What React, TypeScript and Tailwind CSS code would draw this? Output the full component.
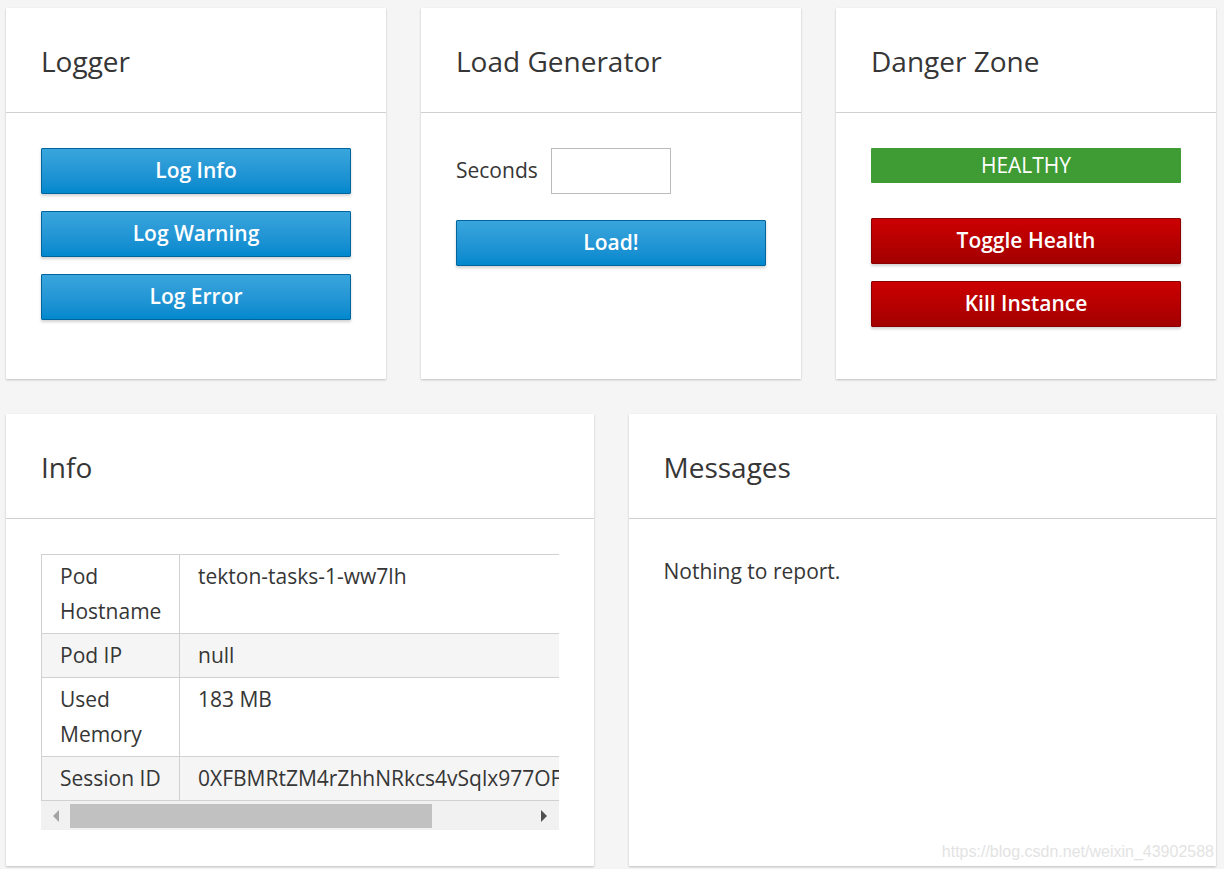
import type { ReactNode } from 'react'

const font = { fontFamily: '"Open Sans", "Noto Sans", sans-serif' }

function Card({ title, children }: { title: string; children: ReactNode }) {
  return (
    <section className="flex flex-col bg-white shadow-[0_1px_2px_0_rgba(0,0,0,0.22)]">
      {/* Header */}
      <div className="flex h-[105px] items-center border-b border-[#d1d1d1] px-[35px] pt-[1px]">
        <h2 className="text-[28px] font-normal leading-none text-[#363636]">{title}</h2>
      </div>
      <div className="flex flex-1 flex-col px-[35px] pt-[35px] pb-[35px]">{children}</div>
    </section>
  )
}

function Btn({ children, danger = false }: { children: ReactNode; danger?: boolean }) {
  return (
    <button
      className={
        danger
          ? 'flex h-[46px] w-full items-center justify-center rounded-[1px] border border-[#8b0000] bg-gradient-to-b from-[#cc0000] to-[#a30000] text-[21px] font-semibold text-white shadow-[0_2px_3px_rgba(0,0,0,0.18)]'
          : 'flex h-[46px] w-full items-center justify-center rounded-[1px] border border-[#00659c] bg-gradient-to-b from-[#39a5dc] to-[#0088ce] text-[21px] font-semibold text-white shadow-[0_2px_3px_rgba(0,0,0,0.18)]'
      }
    >
      {children}
    </button>
  )
}

const rows = [
  { label: 'Pod Hostname', value: 'tekton-tasks-1-ww7lh' },
  { label: 'Pod IP', value: 'null' },
  { label: 'Used Memory', value: '183 MB' },
  { label: 'Session ID', value: '0XFBMRtZM4rZhhNRkcs4vSqlx977OFmLq3bWfT2nY8aKd' },
]

export default function App() {
  return (
    <div
      className="relative min-h-screen bg-[#f5f5f5] pt-[8px] pr-[8px] pb-[3px] pl-[6px] text-[#363636]"
      style={font}
    >
      {/* Top row */}
      <div className="grid grid-cols-3 gap-[35px]">
        <Card title="Logger">
          <div className="flex flex-col gap-[17px] pb-[24px]">
            <Btn>Log Info</Btn>
            <Btn>Log Warning</Btn>
            <Btn>Log Error</Btn>
          </div>
        </Card>

        <Card title="Load Generator">
          <div className="flex items-center gap-[13px]">
            <label className="text-[21px]">Seconds</label>
            <input className="h-[46px] w-[120px] border border-[#bbbbbb] bg-white px-2 text-[21px] outline-none" />
          </div>
          <div className="mt-[26px]">
            <Btn>Load!</Btn>
          </div>
        </Card>

        <Card title="Danger Zone">
          <div className="flex h-[35px] items-center justify-center rounded-[1px] bg-[#3f9c35] text-[21px] text-white">
            HEALTHY
          </div>
          <div className="mt-[35px] flex flex-col gap-[17px]">
            <Btn danger>Toggle Health</Btn>
            <Btn danger>Kill Instance</Btn>
          </div>
        </Card>
      </div>

      {/* Bottom row */}
      <div className="mt-[35px] grid grid-cols-2 gap-[35px]">
        <Card title="Info">
          <div className="overflow-hidden">
            <table className="border-collapse border border-[#d1d1d1] text-[21px] leading-[35px]">
              <tbody>
                {rows.map((r, i) => (
                  <tr key={r.label} className={i % 2 === 1 ? 'bg-[#f5f5f5]' : 'bg-white'}>
                    <td className="w-[138px] min-w-[138px] border border-[#d1d1d1] py-[4px] pr-[10px] pl-[18px] align-top">
                      {r.label}
                    </td>
                    <td className="border border-[#d1d1d1] py-[4px] pr-[18px] pl-[18px] align-top whitespace-nowrap">
                      {r.value}
                    </td>
                  </tr>
                ))}
              </tbody>
            </table>
          </div>
          {/* scrollbar */}
          <div className="flex h-[29px] items-center bg-[#f1f1f1]">
            <div className="flex w-[29px] items-center justify-center">
              <span className="h-0 w-0 border-y-[6px] border-r-[6px] border-y-transparent border-r-[#a3a3a3]" />
            </div>
            <div className="h-[24px] w-[362px] bg-[#c1c1c1]" />
            <div className="flex-1" />
            <div className="flex w-[29px] items-center justify-center">
              <span className="h-0 w-0 border-y-[6px] border-l-[6px] border-y-transparent border-l-[#505050]" />
            </div>
          </div>
          <div className="h-[1px]" />
        </Card>

        <Card title="Messages">
          <p className="text-[21px] leading-[35px]">Nothing to report.</p>
        </Card>
      </div>

      <span
        className="absolute top-[840px] right-[10px] text-[16px] text-[#e3e3e3]"
        style={{ fontFamily: '"Liberation Sans", Arial, sans-serif' }}
      >
        https://blog.csdn.net/weixin_43902588
      </span>
    </div>
  )
}
